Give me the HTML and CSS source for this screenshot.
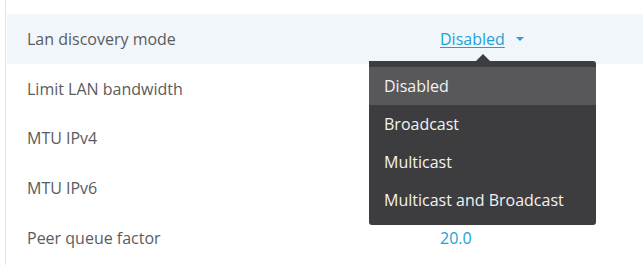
FILE: index.html
```html
<!DOCTYPE html>
<html>
<head>
<meta charset="utf-8">
<link rel="stylesheet" href="styles.css">
</head>
<body>
<div class="panel">
  <div class="rows">
    <div class="row active">
      <div class="label">Lan discovery mode</div>
      <div class="value">
        <span class="select"><span class="link">Disabled</span><span class="caret"></span>
          <div class="menu">
            <div class="item selected">Disabled</div>
            <div class="item">Broadcast</div>
            <div class="item">Multicast</div>
            <div class="item">Multicast and Broadcast</div>
          </div>
        </span>
      </div>
    </div>
    <div class="row">
      <div class="label">Limit LAN bandwidth</div>
      <div class="value"></div>
    </div>
    <div class="row">
      <div class="label">MTU IPv4</div>
      <div class="value"></div>
    </div>
    <div class="row">
      <div class="label">MTU IPv6</div>
      <div class="value"></div>
    </div>
    <div class="row">
      <div class="label">Peer queue factor</div>
      <div class="value num">20.0</div>
    </div>
  </div>
</div>
</body>
</html>
```
FILE: styles.css
```css
html, body {
  margin: 0;
  padding: 0;
  background: #ffffff;
  font-family: "Open Sans", "Noto Sans", sans-serif;
}
.panel {
  margin-left: 5px;
  border-left: 1px solid #e4e4e6;
  height: 265px;
  padding-top: 14px;
  box-sizing: border-box;
}
.rows {
  margin-left: 1px;
}
.row {
  display: flex;
  align-items: center;
  height: 49.7px;
  font-size: 16px;
  color: #5b5b5d;
}
.row.active {
  background: #f1f6fb;
}
.label {
  width: 433px;
  padding-left: 20px;
  box-sizing: border-box;
}
.value {
  flex: 1;
  color: #1da1d6;
}
.select {
  position: relative;
  display: inline-flex;
  align-items: center;
}
.link {
  text-decoration: underline;
  text-underline-offset: 2px;
}
.caret {
  width: 0;
  height: 0;
  margin-left: 11px;
  border-left: 4.5px solid transparent;
  border-right: 4.5px solid transparent;
  border-top: 4.5px solid #1da1d6;
}
.menu {
  position: absolute;
  left: -71px;
  top: 33px;
  width: 227px;
  padding: 6px 0 6px;
  background: #3d3d3f;
  border-radius: 0 3px 3px 3px;
  color: #f2f2f2;
  font-size: 16px;
  font-weight: 500;
  box-sizing: border-box;
}
.menu::before {
  content: "";
  position: absolute;
  top: -7px;
  left: 107px;
  border-left: 7px solid transparent;
  border-right: 7px solid transparent;
  border-bottom: 7px solid #3d3d3f;
}
.item {
  height: 38px;
  line-height: 38px;
  padding-left: 15px;
}
.item.selected {
  background: #58585a;
}
```
